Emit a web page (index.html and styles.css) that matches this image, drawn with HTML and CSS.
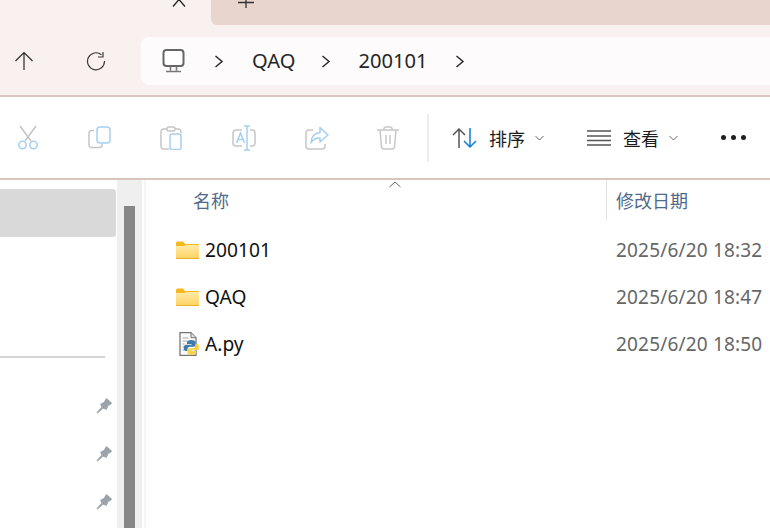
FILE: index.html
```html
<!DOCTYPE html>
<html lang="zh-CN">
<head>
<meta charset="utf-8">
<title>200101</title>
<link rel="stylesheet" href="styles.css">
</head>
<body>
<div class="window">
  <header class="chrome">
    <div class="tabstrip">
      <div class="tab-active">
        <svg class="tab-close" width="16" height="10" viewBox="0 0 16 10"><path d="M2 8.500 8 1.500l6 7" transform="translate(0 -2)" fill="none" stroke="#222" stroke-width="1.300"/></svg>
      </div>
      <div class="tab-inactive">
        <svg class="tab-plus" width="16" height="9" viewBox="0 0 16 9"><path d="M8 0v8M0 2.500h16" fill="none" stroke="#333" stroke-width="1.300"/></svg>
      </div>
    </div>
    <div class="navrow">
      <div class="nav-buttons">
        <svg class="nav-up" width="20" height="20" viewBox="0 0 20 20"><path d="M10 19V2M1.500 10 10 1.500 18.500 10" fill="none" stroke="#2c2c2c" stroke-width="1.200"/></svg>
        <svg class="nav-refresh" width="20" height="20" viewBox="0 0 20 20"><path d="M15.500 3.800A8.500 8.500 0 1 0 18.500 10" fill="none" stroke="#3a3a3a" stroke-width="1.200"/><path d="M17 1v5h-5" fill="none" stroke="#3a3a3a" stroke-width="1.200"/></svg>
      </div>
      <nav class="address">
        <svg class="pc-icon" width="24" height="24" viewBox="0 0 24 24"><rect x="1.500" y="1" width="20" height="16" rx="3" fill="#fff" stroke="#666" stroke-width="2"/><path d="M8.500 17.500v4M14.500 17.500v4M4 22.500h15" fill="none" stroke="#777" stroke-width="1.600"/></svg>
        <svg class="crumb-sep first" width="10" height="14" viewBox="0 0 10 14"><path d="M1.500 2 8 7.500 1.500 13" fill="none" stroke="#2b2b2b" stroke-width="1.500"/></svg>
        <span class="crumb">QAQ</span>
        <svg class="crumb-sep" width="10" height="14" viewBox="0 0 10 14"><path d="M1.500 2 8 7.500 1.500 13" fill="none" stroke="#2b2b2b" stroke-width="1.500"/></svg>
        <span class="crumb crumb-last">200101</span>
        <svg class="crumb-sep last" width="10" height="14" viewBox="0 0 10 14"><path d="M1.500 2 8 7.500 1.500 13" fill="none" stroke="#2b2b2b" stroke-width="1.500"/></svg>
      </nav>
    </div>
  </header>

  <div class="toolbar">
    <svg class="tool tool-cut" width="24" height="26" viewBox="0 0 24 26"><path d="M4 1l11 15M20 1 9 16" fill="none" stroke="#c4c4c4" stroke-width="1.500"/><circle cx="6.500" cy="20" r="3.700" fill="none" stroke="#a5d0f2" stroke-width="1.500"/><circle cx="17.500" cy="20" r="3.700" fill="none" stroke="#a5d0f2" stroke-width="1.500"/></svg>
    <svg class="tool tool-copy" width="24" height="24" viewBox="0 0 24 24"><path d="M6 4.500H3.500A2.500 2.500 0 0 0 1 7v12a2.500 2.500 0 0 0 2.500 2.500h8A2.500 2.500 0 0 0 14 19v-1" fill="none" stroke="#c6c6c6" stroke-width="1.500"/><rect x="9" y="1" width="13" height="16" rx="3" fill="#fff" stroke="#a5d0f2" stroke-width="1.500"/></svg>
    <svg class="tool tool-paste" width="24" height="24" viewBox="0 0 24 24"><path d="M7 3H3.500A2.500 2.500 0 0 0 1 5.500v15A2.500 2.500 0 0 0 3.500 23H9M15 3h3.500A2.500 2.500 0 0 1 21 5.500V7" fill="none" stroke="#c6c6c6" stroke-width="1.500"/><rect x="7" y="1" width="8" height="4" rx="1.500" fill="#fff" stroke="#c6c6c6" stroke-width="1.500"/><rect x="10" y="8" width="11" height="15.500" rx="2" fill="#fff" stroke="#a5d0f2" stroke-width="1.500"/></svg>
    <svg class="tool tool-rename" width="24" height="26" viewBox="0 0 24 26"><path d="M10 5H4a3 3 0 0 0-3 3v10a3 3 0 0 0 3 3h6M18 5h2a3 3 0 0 1 3 3v10a3 3 0 0 1-3 3h-2" fill="none" stroke="#c6c6c6" stroke-width="1.500"/><path d="M12 1h6M15 1v24M12 25h6M4.500 18 8.500 8l4 10M6 14.500h5" fill="none" stroke="#a5d0f2" stroke-width="1.500"/></svg>
    <svg class="tool tool-share" width="24" height="24" viewBox="0 0 24 24"><path d="M8 4H4a3 3 0 0 0-3 3v13a3 3 0 0 0 3 3h13a3 3 0 0 0 3-3v-2" fill="none" stroke="#c6c6c6" stroke-width="1.500"/><path d="M15 1.500 23 9l-8 7v-4c-4-.300-7 1.500-9 5 .300-6 3.500-10 9-10.500z" fill="#fff" stroke="#a5d0f2" stroke-width="1.500" stroke-linejoin="round"/></svg>
    <svg class="tool tool-trash" width="22" height="24" viewBox="0 0 22 24"><path d="M0 4h22M7 4V3a2 2 0 0 1 2-2h4a2 2 0 0 1 2 2v1M3 4l1.500 17a2.500 2.500 0 0 0 2.500 2h8a2.500 2.500 0 0 0 2.500-2L19 4M9 9v9M13 9v9" fill="none" stroke="#c8c8c8" stroke-width="1.500"/></svg>
    <span class="tool-divider"></span>
    <button class="menu-btn menu-sort">
      <svg width="26" height="22" viewBox="0 0 26 22"><path d="M7 21V2M1 8l6-6 6 6" fill="none" stroke="#555" stroke-width="1.500"/><path d="M18 1v19M12 14l6 6 6-6" fill="none" stroke="#0f7fd6" stroke-width="1.500"/></svg>
      <span class="menu-label">排序</span>
      <svg class="chev" width="9" height="6" viewBox="0 0 9 6"><path d="M.5 1 4.500 5l4-4" fill="none" stroke="#666" stroke-width="1"/></svg>
    </button>
    <button class="menu-btn menu-view">
      <svg width="24" height="16" viewBox="0 0 24 16"><path d="M0 1h24M0 6h24M0 10.500h24M0 15h24" fill="none" stroke="#555" stroke-width="1.300"/></svg>
      <span class="menu-label">查看</span>
      <svg class="chev" width="9" height="6" viewBox="0 0 9 6"><path d="M.5 1 4.500 5l4-4" fill="none" stroke="#666" stroke-width="1"/></svg>
    </button>
    <span class="more"><i></i><i></i><i></i></span>
  </div>

  <main class="body">
    <aside class="sidebar">
      <div class="side-selected"></div>
      <div class="side-divider"></div>
      <div class="pin-row"><svg width="16" height="16" viewBox="0 0 16 16"><path class="pin" d="M10.500 0 16 5l-1.500 2-2 .5-2 4.500L7 10.500 1.500 15.500.5 14.500 5.500 9 4 6l4-2 1-2z"/></svg></div>
      <div class="pin-row"><svg width="16" height="16" viewBox="0 0 16 16"><path class="pin" d="M10.500 0 16 5l-1.500 2-2 .5-2 4.500L7 10.500 1.500 15.500.5 14.500 5.500 9 4 6l4-2 1-2z"/></svg></div>
      <div class="pin-row"><svg width="16" height="16" viewBox="0 0 16 16"><path class="pin" d="M10.500 0 16 5l-1.500 2-2 .5-2 4.500L7 10.500 1.500 15.500.5 14.500 5.500 9 4 6l4-2 1-2z"/></svg></div>
    </aside>
    <div class="side-scroll"><div class="side-thumb"></div></div>
    <section class="files">
      <div class="file-head">
        <div class="col-name">名称
          <svg class="sort-caret" width="12" height="7" viewBox="0 0 12 7"><path d="M.5 6 6 1l5.500 5" fill="none" stroke="#666" stroke-width="1"/></svg>
        </div>
        <div class="col-date">修改日期</div>
      </div>
      <div class="file-row">
        <svg class="file-icon" width="23" height="18" viewBox="0 0 23 18"><use href="#folder"/></svg>
        <span class="file-name">200101</span>
        <span class="file-date">2025/6/20 18:32</span>
      </div>
      <div class="file-row">
        <svg class="file-icon" width="23" height="18" viewBox="0 0 23 18"><use href="#folder"/></svg>
        <span class="file-name">QAQ</span>
        <span class="file-date">2025/6/20 18:47</span>
      </div>
      <div class="file-row">
        <svg class="file-icon" width="23" height="24" viewBox="0 0 23 24">
          <path d="M4 .7H15L20 5.700V23.300H4z" fill="#fbfbfb" stroke="#777" stroke-width="1.300"/>
          <path d="M15 .7v5h5" fill="#ddd" stroke="#777"/>
          <path d="M6.500 6h6M6.500 9h5M6.500 12h2M6.500 15h2M6.500 18h2" stroke="#aaa" stroke-width="1.200"/>
          <path d="M15.500 8c-3.500 0-4.500 1-4.500 2.300V12h4.500v.8H10c-1.500 0-2.200 1.300-2.200 3.200S8.500 19 10 19h1.500v-2c0-1.300 1-2.300 2.500-2.300h3.500c1.200 0 2-.9 2-2v-2.400C19.500 9 18 8 15.500 8z" fill="#3f7cad"/>
          <path d="M15.500 8c-3.500 0-4.500 1-4.500 2.300V12h4.500v.8H10c-1.500 0-2.200 1.300-2.200 3.200S8.500 19 10 19h1.500v-2c0-1.300 1-2.300 2.500-2.300h3.500c1.200 0 2-.9 2-2v-2.400C19.500 9 18 8 15.500 8z" fill="#f7d44f" transform="rotate(180 15.500 15.500)"/>
        </svg>
        <span class="file-name">A.py</span>
        <span class="file-date">2025/6/20 18:50</span>
      </div>
    </section>
  </main>
</div>
<svg class="defs" width="0" height="0">
  <defs>
    <linearGradient id="fg" x1="0" y1="0" x2="0" y2="1"><stop offset="0" stop-color="#ffeaa6"/><stop offset="1" stop-color="#fdd464"/></linearGradient>
    <g id="folder">
      <path d="M0 2a1.500 1.500 0 0 1 1.500-1.500H7L9 3h14v15H0z" fill="#f5b81f"/>
      <path d="M0 5h8.500L10 4h13v13.500H0z" fill="url(#fg)"/>
      <path d="M0 17h23v1H0z" fill="#eeb02c"/>
    </g>
  </defs>
</svg>
</body>
</html>
```
FILE: styles.css
```css
* { box-sizing: border-box; }
html, body { margin: 0; padding: 0; }
body {
  width: 770px;
  height: 528px;
  overflow: hidden;
  background: #fff;
  font-family: "Noto Sans", "Noto Sans CJK SC", sans-serif;
  color: #1a1a1a;
}
.window { display: flex; flex-direction: column; height: 528px; }
.defs { display: block; height: 0; }

.chrome { background: #f8f1ef; border-bottom: 2px solid #dac5be; height: 97px; flex: none; }
.tabstrip { display: flex; height: 25px; }
.tab-active { width: 211px; display: flex; justify-content: flex-start; padding-left: 171px; align-items: flex-start; }
.tab-close { display: block; }
.tab-inactive { flex: 1; background: #e8d5ce; border-radius: 0 0 0 6px; padding-left: 27px; }
.tab-plus { display: block; }

.navrow { display: flex; align-items: center; height: 70px; padding: 12px 0 10px; }
.nav-buttons { width: 141px; display: flex; gap: 52px; padding-left: 14px; align-items: center; }
.address {
  flex: 1;
  height: 48px;
  background: #fdfbfb;
  border-radius: 8px 0 0 8px;
  display: flex;
  align-items: center;
  padding-left: 21px;
  font-size: 20.100px;
  line-height: 24px;
  color: #262626;
}
.crumb-sep { margin-left: 26px; flex: none; }
.crumb-sep.first { margin-left: 28px; }
.crumb-sep.last { margin-left: 28px; }
.crumb { margin-left: 28px; }
.crumb-last { margin-left: 27px; }

.toolbar {
  height: 83px;
  flex: none;
  background: #fff;
  border-bottom: 2px solid #dac5be;
  display: flex;
  align-items: center;
}
.tool { flex: none; display: block; }
.tool-cut { margin-left: 16px; }
.tool-copy { margin-left: 48px; }
.tool-paste { margin-left: 48px; }
.tool-rename { margin-left: 48px; }
.tool-share { margin-left: 49px; }
.tool-trash { margin-left: 48px; }
.tool-divider { width: 2px; height: 48px; background: #eeeeee; margin-left: 28px; flex: none; }
.menu-btn {
  border: 0;
  background: none;
  padding: 0;
  display: flex;
  align-items: center;
  font: inherit;
  color: #1c1c1c;
  flex: none;
}
.menu-sort { margin-left: 23px; }
.menu-sort .menu-label { margin-left: 11px; }
.menu-view { margin-left: 43px; }
.menu-view .menu-label { margin-left: 12px; }
.menu-label { font-size: 18px; line-height: 24px; font-family: "Noto Sans CJK SC", sans-serif; }
.chev { margin-left: 10px; }
.more { display: flex; gap: 5px; margin-left: 43px; flex: none; }
.more i { width: 5px; height: 5px; border-radius: 50%; background: #1f1f1f; display: block; }

.body { flex: 1; display: flex; min-height: 0; }
.sidebar { width: 117px; flex: none; padding-top: 9px; }
.side-selected { width: 116px; height: 48px; background: #d9d9d9; border-radius: 0 3px 3px 0; }
.side-divider { width: 105px; height: 2px; background: #d4d4d4; margin-top: 119px; margin-bottom: 24px; }
.pin-row { height: 48px; display: flex; align-items: center; justify-content: flex-end; padding-right: 5px; }
.pin { fill: #9aa4aa; }
.side-scroll { width: 25px; flex: none; background: #efefef; padding: 26px 7px 0; }
.side-thumb { height: 100%; background: #868686; }

.files { flex: 1; min-width: 0; margin-left: 2px; border-left: 2px solid #f5f5f5; }
.file-head { display: grid; grid-template-columns: 460px 1fr; height: 40px; margin-bottom: 6px; font-size: 18px; line-height: 40px; color: #4f6a8a; font-family: "Noto Sans CJK SC", sans-serif; }
.col-name { padding-left: 47px; position: relative; }
.sort-caret { position: absolute; left: 243px; top: 1px; }
.col-date { border-left: 1px solid #e2e2e2; padding-left: 9px; }
.file-row { display: flex; align-items: center; height: 47px; padding-left: 30px; }
.file-icon { flex: none; display: block; }
.file-name { margin-left: 6px; font-size: 19.200px; line-height: 24px; color: #111; width: 411px; flex: none; }
.file-date { font-size: 19px; line-height: 24px; letter-spacing: .18px; color: #666; white-space: nowrap; }
```
